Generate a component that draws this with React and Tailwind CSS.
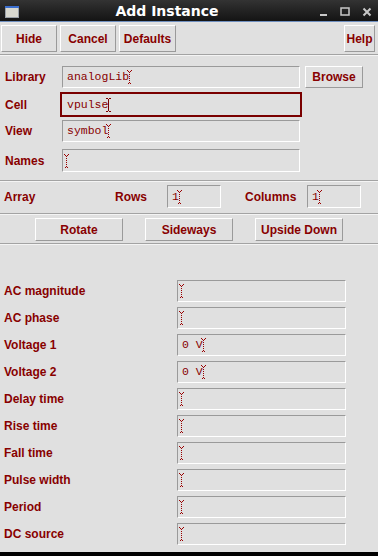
import React from "react";

const RED = "text-[#880000]";

function Cursor({ solid = false, className = "" }) {
  return (
    <svg width="5" height="14" viewBox="0 0 5 14" className={"shrink-0 " + className}>
      {solid ? (
        <g stroke="#7a0000" strokeWidth="1" fill="none">
          <path d="M0 0.5H2M3 0.5H5M0 13.5H2M3 13.5H5" />
          <path d="M2.5 1V13" />
        </g>
      ) : (
        <g fill="#990000">
          <rect x="0" y="0" width="1" height="1" />
          <rect x="4" y="0" width="1" height="1" />
          <rect x="1" y="1" width="1" height="1" />
          <rect x="3" y="1" width="1" height="1" />
          {[2, 4, 6, 8, 10, 12].map((y) => (
            <rect key={y} x="2" y={y} width="1" height="1" />
          ))}
          <rect x="1" y="13" width="1" height="1" />
          <rect x="3" y="13" width="1" height="1" />
        </g>
      )}
    </svg>
  );
}

function Field({ value = "", className = "", solid = false }) {
  return (
    <div
      className={
        "flex items-center h-[22px] border border-t-[#9a9a9a] border-l-[#9a9a9a] border-b-white border-r-white bg-[#e0e0e0] pl-[4px] " +
        className
      }
    >
      {value ? (
        <span className={"font-['Liberation_Mono',monospace] font-normal text-[11.5px] leading-none whitespace-pre " + RED}>
          {value}
        </span>
      ) : null}
      <Cursor solid={solid} className={value ? "ml-[-2px]" : "ml-[-3px]"} />
    </div>
  );
}

function Btn({ children, className = "" }) {
  return (
    <div
      className={
        "flex items-center justify-center border border-t-white border-l-white border-b-[#9a9a9a] border-r-[#9a9a9a] bg-[#e0e0e0] font-bold text-[12px] leading-none " +
        RED +
        " " +
        className
      }
    >
      {children}
    </div>
  );
}

function Sep({ className = "" }) {
  return <div className={"h-[2px] border-t border-t-[#a3a3a3] border-b border-b-[#f4f4f4] " + className} />;
}

const params = [
  ["AC magnitude", ""],
  ["AC phase", ""],
  ["Voltage 1", "0 V"],
  ["Voltage 2", "0 V"],
  ["Delay time", ""],
  ["Rise time", ""],
  ["Fall time", ""],
  ["Pulse width", ""],
  ["Period", ""],
  ["DC source", ""],
];

export default function App() {
  return (
    <div className="w-[378px] h-[556px] bg-[#e0e0e0] flex flex-col overflow-hidden font-['Liberation_Sans',Arial,sans-serif]">
      {/* Title bar */}
      <div className="h-[21px] bg-gradient-to-b from-[#333333] to-[#141414] flex items-center relative shrink-0">
        <svg width="14" height="12" viewBox="0 0 14 12" className="ml-[5px] mt-[2px]">
          <rect x="0.5" y="0.5" width="13" height="11" fill="#d8d8d0" stroke="#9aa0a8" />
          <rect x="0" y="0" width="14" height="2" fill="#3b6fd0" />
        </svg>
        <div className="absolute left-0 right-0 top-0 h-[21px] flex items-center justify-center pointer-events-none">
          <span className="text-white font-bold text-[14px] leading-none font-['DejaVu_Sans',sans-serif] ml-[-44px]">
            Add Instance
          </span>
        </div>
        <div className="ml-auto flex items-center mr-[6px] gap-[12px] mt-[2px]">
          <svg width="9" height="10" viewBox="0 0 9 10">
            <rect x="1" y="7" width="7" height="2" fill="#c8c8c8" />
          </svg>
          <svg width="10" height="10" viewBox="0 0 10 10">
            <rect x="1" y="1" width="8" height="7" fill="none" stroke="#c8c8c8" strokeWidth="1.5" />
          </svg>
          <svg width="10" height="10" viewBox="0 0 10 10">
            <path d="M1.5 1.5L8.5 8.5M8.5 1.5L1.5 8.5" stroke="#c8c8c8" strokeWidth="2" />
          </svg>
        </div>
      </div>
      <div className="h-[1px] bg-[#6f8fbf] shrink-0" />

      {/* Toolbar */}
      <div className="flex mt-[3px] h-[27px] shrink-0">
        <Btn className="ml-[1px] w-[56px]">Hide</Btn>
        <Btn className="ml-[3px] w-[56px]">Cancel</Btn>
        <Btn className="ml-[3px] w-[57px]">Defaults</Btn>
        <Btn className="ml-auto mr-[3px] w-[31px]">Help</Btn>
      </div>
      <Sep className="mt-[2px]" />

      {/* Library */}
      <div className={"flex items-center mt-[10px] h-[22px] font-bold text-[12px] " + RED}>
        <span className="w-[62px] pl-[5px]">Library</span>
        <Field value="analogLib" className="w-[238px]" />
        <Btn className="ml-[5px] w-[58px] h-[22px]">Browse</Btn>
      </div>
      {/* Cell */}
      <div className={"flex items-center mt-[4px] h-[25px] font-bold text-[12px] " + RED}>
        <span className="w-[60px] pl-[5px]">Cell</span>
        <div className="w-[242px] h-[25px] border-2 border-[#7a0000] flex">
          <div className="flex-1 flex items-center pl-[5px]">
            <span className={"font-['Liberation_Mono',monospace] font-normal text-[11.5px] leading-none " + RED}>vpulse</span>
            <Cursor solid className="ml-[-2px]" />
          </div>
        </div>
      </div>
      {/* View */}
      <div className={"flex items-center mt-[3px] h-[22px] font-bold text-[12px] " + RED}>
        <span className="w-[62px] pl-[5px]">View</span>
        <Field value="symbol" className="w-[238px]" />
      </div>
      {/* Names */}
      <div className={"flex items-center mt-[7px] h-[23px] font-bold text-[12px] " + RED}>
        <span className="w-[62px] pl-[5px]">Names</span>
        <Field className="w-[238px] h-[23px]" />
      </div>
      <Sep className="mt-[8px]" />

      {/* Array */}
      <div className={"flex items-center mt-[3px] h-[23px] font-bold text-[12px] " + RED}>
        <span className="w-[115px] pl-[4px]">Array</span>
        <span className="w-[52px]">Rows</span>
        <Field value="1" className="w-[54px] h-[23px]" />
        <span className="ml-[24px] w-[62px]">Columns</span>
        <Field value="1" className="w-[54px] h-[23px]" />
      </div>
      <Sep className="mt-[5px]" />

      {/* Transform buttons */}
      <div className="flex mt-[3px] h-[23px] shrink-0">
        <Btn className="ml-[35px] w-[88px]">Rotate</Btn>
        <Btn className="ml-[22px] w-[88px]">Sideways</Btn>
        <Btn className="ml-[22px] w-[88px]">Upside Down</Btn>
      </div>
      <Sep className="mt-[2px]" />

      {/* Parameters */}
      <div className="flex flex-col gap-[5px] mt-[35px]">
        {params.map(([label, value]) => (
          <div key={label} className={"flex items-center h-[22px] font-bold text-[12px] " + RED}>
            <span className="w-[177px] pl-[4px]">{label}</span>
            <Field value={value} className="w-[169px]" />
          </div>
        ))}
      </div>

      <div className="mt-auto h-[4px] bg-black shrink-0" />
    </div>
  );
}
